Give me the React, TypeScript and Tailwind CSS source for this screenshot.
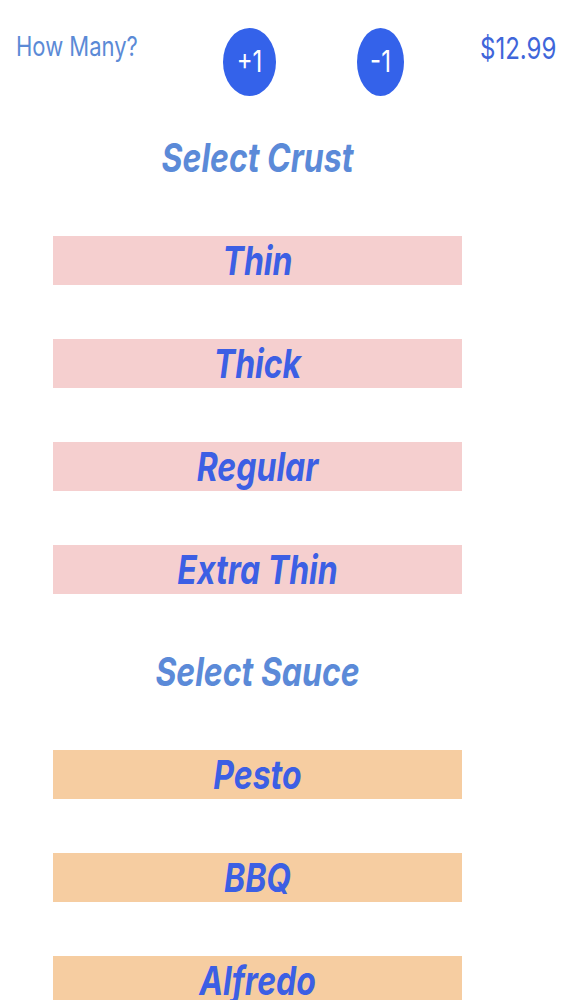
import React from 'react';

// Opciones de la pizza
const crusts = ['Thin', 'Thick', 'Regular', 'Extra Thin'];
const sauces = ['Pesto', 'BBQ', 'Alfredo'];

const Title: React.FC<{ text: string; className?: string }> = ({ text, className }) => (
  <div className={`flex justify-center ${className ?? ''}`}>
    <span className="inline-block origin-top scale-y-125 text-[32px] leading-none font-bold italic text-[#5b8ad8]">
      {text}
    </span>
  </div>
);

const Option: React.FC<{ label: string; bg: string }> = ({ label, bg }) => (
  <button className={`flex h-[49px] w-full items-center justify-center ${bg}`}>
    <span className="inline-block scale-y-125 text-[32px] leading-none font-bold italic text-[#3c5fe4]">
      {label}
    </span>
  </button>
);

const App: React.FC = () => {
  return (
    <div className="min-h-screen overflow-hidden bg-white font-['Inter',sans-serif]">
      {/* Cabecera: cantidad y precio */}
      <div className="flex items-start pt-[28px]">
        <div className="w-[223px] pl-[16px] pt-[4px]">
          <span className="inline-block origin-top scale-y-125 text-[22px] leading-none text-[#5b8ad6]">
            How Many?
          </span>
        </div>
        <button className="flex h-[68px] w-[53px] items-center justify-center rounded-[50%] bg-[#3462ea]">
          <span className="inline-block scale-y-125 text-[24px] leading-none text-white">+1</span>
        </button>
        <div className="w-[81px]" />
        <button className="flex h-[68px] w-[47px] items-center justify-center rounded-[50%] bg-[#3462ea]">
          <span className="inline-block scale-y-125 text-[24px] leading-none text-white">-1</span>
        </button>
        <div className="w-[76px]" />
        <div className="pt-[6px]">
          <span className="inline-block origin-top scale-y-125 text-[24px] leading-none text-[#3f66da]">
            $12.99
          </span>
        </div>
      </div>

      <div className="ml-[53px] w-[409px]">
        <Title text="Select Crust" className="mt-[42px]" />
        <div className="mt-[66px] flex flex-col gap-[54px]">
          {crusts.map((c) => (
            <Option key={c} label={c} bg="bg-[#f5cfcf]" />
          ))}
        </div>

        <Title text="Select Sauce" className="mt-[58px]" />
        <div className="mt-[66px] flex flex-col gap-[54px]">
          {sauces.map((s) => (
            <Option key={s} label={s} bg="bg-[#f6cda1]" />
          ))}
        </div>
      </div>
    </div>
  );
};

export default App;
